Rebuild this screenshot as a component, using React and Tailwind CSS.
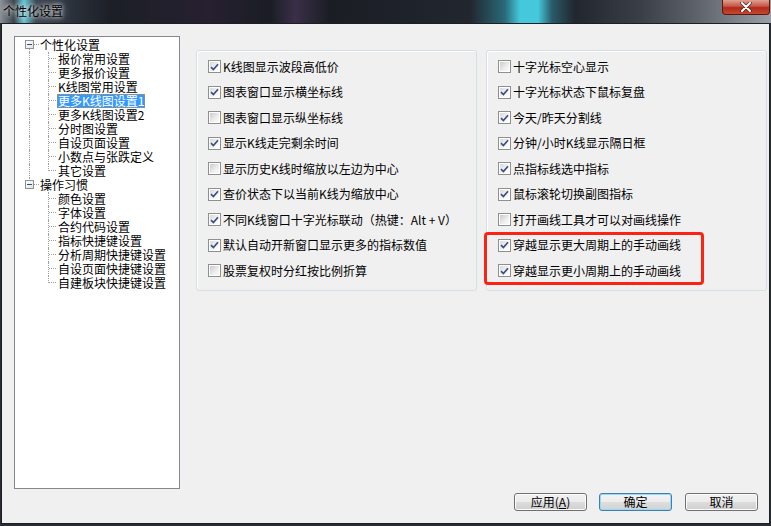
import React from "react";

const treeGroups = [
  {
    label: "个性化设置",
    items: [
      "报价常用设置",
      "更多报价设置",
      "K线图常用设置",
      "更多K线图设置1",
      "更多K线图设置2",
      "分时图设置",
      "自设页面设置",
      "小数点与张跌定义",
      "其它设置",
    ],
  },
  {
    label: "操作习惯",
    items: [
      "颜色设置",
      "字体设置",
      "合约代码设置",
      "指标快捷键设置",
      "分析周期快捷键设置",
      "自设页面快捷键设置",
      "自建板块快捷键设置",
    ],
  },
];

const leftOptions = [
  { label: "K线图显示波段高低价", checked: true },
  { label: "图表窗口显示横坐标线", checked: true },
  { label: "图表窗口显示纵坐标线", checked: false },
  { label: "显示K线走完剩余时间", checked: true },
  { label: "显示历史K线时缩放以左边为中心", checked: false },
  { label: "查价状态下以当前K线为缩放中心", checked: true },
  { label: "不同K线窗口十字光标联动（热键：Alt + V）", checked: true },
  { label: "默认自动开新窗口显示更多的指标数值", checked: true },
  { label: "股票复权时分红按比例折算", checked: false },
];

const rightOptions = [
  { label: "十字光标空心显示", checked: false },
  { label: "十字光标状态下鼠标复盘", checked: true },
  { label: "今天/昨天分割线", checked: true },
  { label: "分钟/小时K线显示隔日框", checked: true },
  { label: "点指标线选中指标", checked: true },
  { label: "鼠标滚轮切换副图指标", checked: true },
  { label: "打开画线工具才可以对画线操作", checked: false },
  { label: "穿越显示更大周期上的手动画线", checked: true },
  { label: "穿越显示更小周期上的手动画线", checked: true },
];

function CheckBox({ checked }) {
  return (
    <span className="w-[13px] h-[13px] border border-[#8e8f8f] bg-white p-[1px] shrink-0 flex">
      <span
        className={
          checked
            ? "flex-1 flex items-center justify-center bg-[linear-gradient(135deg,#d8d8d8,#f6f6f6_60%,#ffffff)]"
            : "flex-1 flex items-center justify-center bg-[linear-gradient(135deg,#cbcbcb,#eeeeee_60%,#fafafa)]"
        }
      >
        {checked && (
          <svg width="9" height="8" viewBox="0 0 9 8">
            <path
              d="M1 4.2 L3.4 6.6 L8 1.2"
              stroke="#3b4d8c"
              strokeWidth="1.7"
              fill="none"
            />
          </svg>
        )}
      </span>
    </span>
  );
}

function OptionPanel({ options, children }) {
  return (
    <div className="relative w-[281px] h-[241px] border border-[#d5dfe5] rounded-[3px] shadow-[inset_1px_1px_0_#ffffff] pt-[3px] pl-[11px]">
      {options.map((o) => (
        <div key={o.label} className="h-[25.5px] flex items-center gap-[2px]">
          <CheckBox checked={o.checked} />
          <span className="text-[12px] leading-none text-black whitespace-nowrap">
            {o.label}
          </span>
        </div>
      ))}
      {children}
    </div>
  );
}

function MinusBox() {
  return (
    <span className="absolute left-[10px] top-[2px] w-[9px] h-[9px] border border-[#919191] bg-[linear-gradient(135deg,#ffffff,#e2e2e2)] flex items-center justify-center z-10">
      <span className="w-[5px] h-[1px] bg-[#2f4e8a]" />
    </span>
  );
}

function Tree() {
  return (
    <div className="w-[166px] h-[453px] border border-[#828790] bg-white pt-[1px] text-[12px] leading-none text-black">
      {treeGroups.map((g, gi) => {
        const lastGroup = gi === treeGroups.length - 1;
        return (
          <div key={g.label}>
            <div className="relative h-[14px] flex items-center pl-[25px]">
              {gi === 0 ? (
                <span className="absolute left-[14px] top-[7px] h-[7px] border-l border-dotted border-[#a0a0a0]" />
              ) : (
                <span className="absolute left-[14px] top-0 h-[7px] border-l border-dotted border-[#a0a0a0]" />
              )}
              <span className="absolute left-[19px] top-[6px] w-[5px] border-t border-dotted border-[#a0a0a0]" />
              <MinusBox />
              <span className="whitespace-nowrap">{g.label}</span>
            </div>
            {g.items.map((item, i) => {
              const last = i === g.items.length - 1;
              const selected = item === "更多K线图设置1";
              return (
                <div key={item} className="relative h-[14px] flex items-center pl-[42px]">
                  {!lastGroup && (
                    <span className="absolute left-[14px] top-0 h-[14px] border-l border-dotted border-[#a0a0a0]" />
                  )}
                  <span
                    className={
                      last
                        ? "absolute left-[33px] top-0 h-[7px] border-l border-dotted border-[#a0a0a0]"
                        : "absolute left-[33px] top-0 h-[14px] border-l border-dotted border-[#a0a0a0]"
                    }
                  />
                  <span className="absolute left-[34px] top-[6px] w-[7px] border-t border-dotted border-[#a0a0a0]" />
                  <span
                    className={
                      selected
                        ? "h-[14px] flex items-center px-[1px] bg-[#3399ff] text-white outline outline-1 outline-dotted outline-[#d08a2c] -outline-offset-1 whitespace-nowrap"
                        : "h-[14px] flex items-center px-[1px] whitespace-nowrap"
                    }
                  >
                    {item}
                  </span>
                </div>
              );
            })}
          </div>
        );
      })}
    </div>
  );
}

function Button({ children, focused }) {
  return (
    <button
      className={
        focused
          ? "w-[73px] h-[18px] rounded-[3px] border border-[#3c7fb1] shadow-[inset_0_0_0_1px_#98d9f7] bg-[linear-gradient(#f4f4f4,#ececec_50%,#dedede_50%,#d2d2d2)] text-[12px] leading-none text-black flex items-center justify-center"
          : "w-[73px] h-[18px] rounded-[3px] border border-[#707070] shadow-[inset_0_0_0_1px_#fcfcfc] bg-[linear-gradient(#f2f2f2,#ebebeb_50%,#dddddd_50%,#cfcfcf)] text-[12px] leading-none text-black flex items-center justify-center"
      }
    >
      {children}
    </button>
  );
}

export default function App() {
  return (
    <div className="w-[771px] h-[526px] overflow-hidden flex flex-col bg-[#2a2d33] font-['Noto_Sans_CJK_SC','SimSun',sans-serif]">
      {/* 标题栏 */}
      <div className="h-[23px] shrink-0 flex justify-between bg-[linear-gradient(90deg,#8d9299_0px,#3a4048_14px,#62c6d8_24px,#3a4450_36px,#1c1f26_110px,#262030_210px,#1a1d24_270px,#3a2f48_295px,#1a1d24_330px,#22262e_470px,#2a6a7a_505px,#45c8dc_520px,#45c8dc_538px,#2a5a68_552px,#22262e_575px,#3a3e46_640px,#60646c_700px,#9a9ea6_771px)]">
        <span className="pl-[3px] pt-[5px] text-[12px] leading-none text-black [text-shadow:0_0_4px_#ffffff,0_0_8px_#d0d0d0]">
          个性化设置
        </span>
        <div className="w-[48px] h-[15px] mr-[1px] rounded-b-[4px] border border-t-0 border-[#5a1a12] bg-[linear-gradient(#e0a090,#c75546_45%,#b02a18_55%,#c8482e)] flex items-center justify-center">
          <svg width="12" height="10" viewBox="0 0 12 10">
            <path d="M2 1 L10 9 M10 1 L2 9" stroke="#3a2a28" strokeWidth="3.4" strokeLinecap="round" />
            <path d="M2 1 L10 9 M10 1 L2 9" stroke="#ffffff" strokeWidth="2" strokeLinecap="round" />
          </svg>
        </div>
      </div>

      {/* 对话框主体 */}
      <div className="flex-1 mx-[1px] mb-[2px] border border-[#1e1f22] bg-[#f0f0f0] pl-[12px] pt-[12px] flex flex-col">
        <div className="flex">
          <Tree />
          <div className="ml-[16px] mt-[14px] flex gap-[9px]">
            <OptionPanel options={leftOptions} />
            <OptionPanel options={rightOptions}>
              <div className="absolute left-[-3px] top-[181px] w-[220px] h-[53px] border-[3px] border-[#fc2314] rounded-[4px] pointer-events-none" />
            </OptionPanel>
          </div>
        </div>
        <div className="mt-[4px] pr-[11px] flex justify-end">
          <Button>
            应用(<span className="underline">A</span>)
          </Button>
          <div className="ml-[12px]">
            <Button focused>确定</Button>
          </div>
          <div className="ml-[13px]">
            <Button>取消</Button>
          </div>
        </div>
      </div>
    </div>
  );
}
